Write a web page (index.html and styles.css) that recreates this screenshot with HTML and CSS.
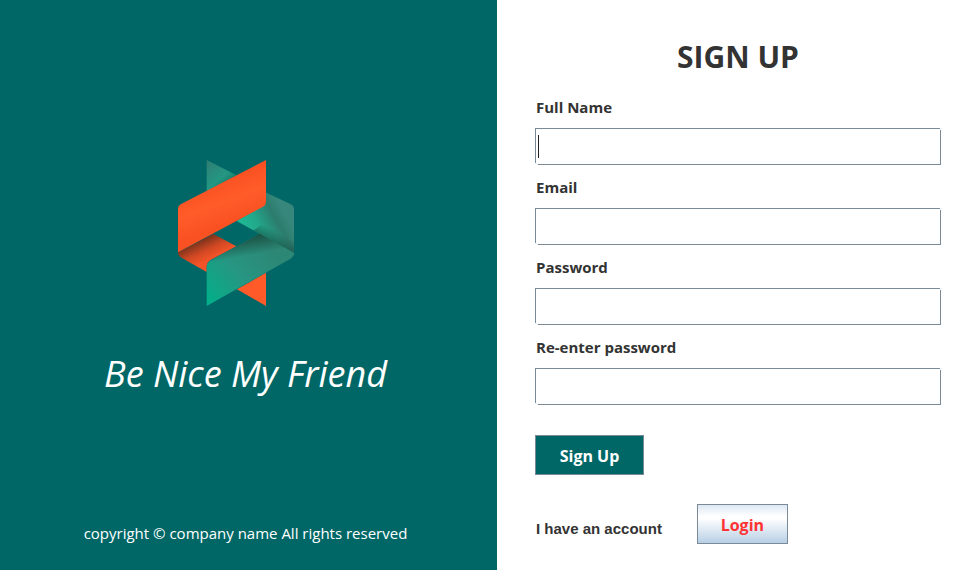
FILE: index.html
```html
<!DOCTYPE html>
<html lang="en">
<head>
<meta charset="utf-8">
<meta name="viewport" content="width=device-width, initial-scale=1">
<title>Sign Up</title>
<link rel="stylesheet" href="styles.css">
</head>
<body>
<div class="page">
  <section class="brand">
    <svg class="logo" viewBox="36 30 348 438" aria-hidden="true">
      <defs>
        <linearGradient id="back-top" x1="122" y1="30" x2="190" y2="110" gradientUnits="userSpaceOnUse">
          <stop offset="0" stop-color="#2f7d72"/><stop offset=".65" stop-color="#249783"/><stop offset="1" stop-color="#187563"/>
        </linearGradient>
        <linearGradient id="back-right" x1="225" y1="225" x2="340" y2="160" gradientUnits="userSpaceOnUse">
          <stop offset="0" stop-color="#1db894"/><stop offset=".35" stop-color="#22a88b"/><stop offset=".75" stop-color="#2c7c6d"/><stop offset="1" stop-color="#37877c"/>
        </linearGradient>
        <linearGradient id="right-shade" x1="330" y1="243" x2="310" y2="280" gradientUnits="userSpaceOnUse">
          <stop offset="0" stop-color="#18483f" stop-opacity="0"/><stop offset="1" stop-color="#18483f" stop-opacity=".75"/>
        </linearGradient>
        <linearGradient id="back-orange" x1="120" y1="258" x2="150" y2="320" gradientUnits="userSpaceOnUse">
          <stop offset="0" stop-color="#70301c"/><stop offset=".55" stop-color="#cf4823"/><stop offset="1" stop-color="#f65428"/>
        </linearGradient>
        <linearGradient id="front-orange" x1="140" y1="100" x2="185" y2="220" gradientUnits="userSpaceOnUse">
          <stop offset="0" stop-color="#fb5122"/><stop offset=".5" stop-color="#ff5c29"/><stop offset="1" stop-color="#fa5123"/>
        </linearGradient>
        <linearGradient id="front-green" x1="125" y1="440" x2="300" y2="285" gradientUnits="userSpaceOnUse">
          <stop offset="0" stop-color="#05ad88"/><stop offset=".5" stop-color="#279682"/><stop offset="1" stop-color="#2c8775"/>
        </linearGradient>
        <linearGradient id="green-shade" x1="270" y1="248" x2="282" y2="310" gradientUnits="userSpaceOnUse">
          <stop offset="0" stop-color="#184b3f"/><stop offset="1" stop-color="#184b3f" stop-opacity="0"/>
        </linearGradient>
      </defs>
      <path fill="url(#back-top)" d="M122 30 212 76 122 124Z"/>
      <path fill="url(#back-right)" d="M296 126 372 161Q384 167 384 177V309L212 213 285 170 296 155Z"/>
      <path fill="url(#right-shade)" d="M384 309 262 241 300 215 384 250Z"/>
      <path fill="url(#back-orange)" d="M36 307 142 252 211 289 137 328Q122 337 122 350V366L44 322Q36 317 36 307Z"/>
      <path fill="#ff5a28" d="M300 368V468L213 418Z"/>
      <path fill="url(#front-orange)" d="M300 30V157Q300 165 291 170L36 307V177Q36 167 47 161Z"/>
      <path fill="url(#front-green)" d="M281 251 384 308V313Q384 320 374 326L122 468V350Q122 338 136 330Z"/>
      <path fill="url(#green-shade)" d="M281 251 384 308V313Q384 320 374 326L136 390V330Z"/>
    </svg>
    <p class="slogan">Be Nice My Friend</p>
    <p class="copyright">copyright © company name All rights reserved</p>
  </section>
  <main class="signup">
    <h1>SIGN UP</h1>
    <form>
      <div class="field">
        <label for="full-name">Full Name</label>
        <div class="box"><input class="active" id="full-name" type="text"></div>
      </div>
      <div class="field">
        <label for="email">Email</label>
        <div class="box"><input id="email" type="email"></div>
      </div>
      <div class="field">
        <label for="password">Password</label>
        <div class="box"><input id="password" type="password"></div>
      </div>
      <div class="field">
        <label for="repeat">Re-enter password</label>
        <div class="box"><input id="repeat" type="password"></div>
      </div>
      <button class="submit" type="submit">Sign Up</button>
      <div class="account">
        <span>I have an account</span>
        <button class="login" type="button">Login</button>
      </div>
    </form>
  </main>
</div>
</body>
</html>
```
FILE: styles.css
```css
* {
  box-sizing: border-box;
}

body {
  margin: 0;
  background: #fff;
  color: #333;
  font-family: "Open Sans", "Noto Sans", sans-serif;
  font-size: 15px;
}

.page {
  display: grid;
  grid-template-columns: 497fr 475fr;
  min-height: 100vh;
}

.brand {
  display: flex;
  flex-direction: column;
  align-items: center;
  padding: 160px 6px 25px 0;
  background: #006766;
  color: #fff;
}

.logo {
  display: block;
  width: 116px;
  height: 146px;
  margin-right: 20px;
}

.slogan {
  margin: 44px 0 0;
  font-size: 36px;
  font-style: italic;
  font-weight: 400;
  line-height: 48px;
}

.copyright {
  margin: auto 0 0;
  font-size: 15px;
  line-height: 24px;
}

.signup {
  padding: 36px 31px 24px 38px;
}

h1 {
  margin: 0 0 17px;
  font-size: 30px;
  font-weight: 700;
  line-height: 42px;
  text-align: center;
}

.field {
  margin-bottom: 10px;
}

label {
  display: block;
  padding: 0 1px;
  margin-bottom: 9px;
  font-weight: 700;
  line-height: 24px;
}

.box {
  position: relative;
  height: 37px;
}

/* Light notches at two opposite corners of the frame */
.box::before,
.box::after {
  content: "";
  position: absolute;
  width: 3px;
  height: 2px;
  background: #f4f6f8;
}

.box::before {
  left: 0;
  bottom: 0;
}

.box::after {
  top: 0;
  right: -2px;
}

input {
  display: block;
  width: 100%;
  height: 100%;
  padding: 0 4px;
  border: 1px solid #7a8a99;
  border-radius: 0;
  outline: none;
  background: #fff;
  color: #333;
  font: inherit;
}

.active {
  background: linear-gradient(#222, #222) 2px 6px / 1px 23px no-repeat #fff;
}

button {
  height: 40px;
  padding: 1px 0 0;
  border: 1px solid #7a8a99;
  border-radius: 0;
  font: inherit;
  font-size: 16px;
  font-weight: 700;
}

.submit {
  display: block;
  width: 109px;
  margin-top: 30px;
  background: #006766;
  color: #fff;
}

.account {
  display: flex;
  align-items: center;
  gap: 35px;
  margin-top: 29px;
  padding-left: 1px;
}

.account span {
  padding-top: 8px;
  font-family: "Liberation Sans", Arial, sans-serif;
  font-weight: 700;
}

.login {
  width: 91px;
  background: linear-gradient(#dde8f3, #fff 30%, #fff 35%, #b8cfe5);
  color: #f33;
}
```
